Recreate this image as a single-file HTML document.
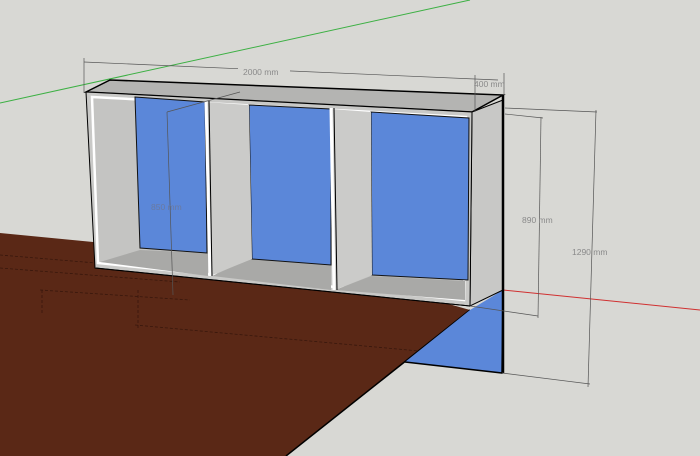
<!DOCTYPE html>
<html><head><style>html,body{margin:0;padding:0;background:#d8d8d4;}svg{display:block}</style></head><body>
<svg width="700" height="456" viewBox="0 0 700 456" xmlns="http://www.w3.org/2000/svg" font-family="Liberation Sans, sans-serif">
<rect width="700" height="456" fill="#d8d8d4"/>
<line x1="0" y1="103" x2="470" y2="0" stroke="#3cb043" stroke-width="1"/>
<line x1="503" y1="290" x2="700" y2="310" stroke="#d03030" stroke-width="1"/>
<!-- floor -->
<polygon points="0,233 300,262 470,310 286,456 0,456" fill="#5a2816"/>
<line x1="470" y1="310" x2="286" y2="456" stroke="#000" stroke-width="1.5"/>
<!-- hidden dashed lines on floor -->
<g stroke="#2a1008" stroke-width="0.8" stroke-dasharray="3,2" fill="none" opacity="0.7">
<line x1="0" y1="255" x2="180" y2="270"/><line x1="0" y1="268" x2="180" y2="282"/>
<line x1="40" y1="290" x2="190" y2="300"/><line x1="135" y1="325" x2="430" y2="352"/>
<line x1="42" y1="290" x2="42" y2="315"/><line x1="138" y1="290" x2="138" y2="328"/>
</g>
<!-- blue lower panel -->
<polygon points="470,310 503,290 502,373 405,362" fill="#5b87d9"/>
<polyline points="405,362 502,373 503,290" fill="none" stroke="#000" stroke-width="1.5"/>
<!-- cabinet top and right -->
<polygon points="86,92 110,80 503,95 472,112" fill="#b4b4b2" stroke="#000" stroke-width="1.5"/>
<polygon points="472,112 503,100 503,290 470,306" fill="#c8c8c6" stroke="#000" stroke-width="1"/>
<line x1="503" y1="95" x2="503" y2="373" stroke="#000" stroke-width="2.5"/>
<!-- front frame -->
<polygon points="86,92 472,112 470,306 95,268" fill="#c9c9c7" stroke="#000" stroke-width="1"/>
<polygon points="92,97 466,117 464,300 98,263" fill="#c4c4c2" stroke="#fff" stroke-width="2.5"/>
<!-- bottom shelves -->
<polygon points="100,262 140,250 208,253 208,276" fill="#a9a9a7"/>
<polygon points="212,276 249,259 331,265 331,290" fill="#a9a9a7"/>
<polygon points="335,290 371,276 465,281 465,300" fill="#a9a9a7"/>
<!-- blue backs -->
<polygon points="135,97 205,102 207,253 140,248" fill="#5b87d9" stroke="#111" stroke-width="1"/>
<polygon points="249,105 331,109 331,265 252,259" fill="#5b87d9" stroke="#111" stroke-width="1"/>
<polygon points="371,112 469,118 468,280 372,275" fill="#5b87d9" stroke="#111" stroke-width="1"/>
<!-- dividers -->
<polygon points="205,102 249,105 252,259 210,276" fill="#cbcbc9"/>
<polygon points="331,109 371,112 372,275 335,290" fill="#cbcbc9"/>
<line x1="206" y1="101" x2="210" y2="276" stroke="#fff" stroke-width="3"/>
<line x1="209" y1="101" x2="212" y2="276" stroke="#000" stroke-width="1"/>
<line x1="331" y1="108" x2="334" y2="290" stroke="#fff" stroke-width="3"/>
<line x1="334" y1="108" x2="337" y2="290" stroke="#000" stroke-width="1"/>
<line x1="96" y1="268" x2="470" y2="306" stroke="#000" stroke-width="1"/>
<!-- dimensions -->
<g stroke="#555" stroke-width="0.7" fill="none">
<line x1="84" y1="62" x2="498" y2="80"/><line x1="84" y1="58" x2="84" y2="92"/>
<line x1="475" y1="75" x2="475" y2="112"/><line x1="504" y1="73" x2="504" y2="95"/>
<line x1="167" y1="112" x2="173" y2="295"/><line x1="167" y1="112" x2="240" y2="92"/>
<line x1="505" y1="114" x2="543" y2="118"/><line x1="541" y1="117" x2="538" y2="318"/><line x1="470" y1="306" x2="538" y2="316"/>
<line x1="505" y1="108" x2="597" y2="112"/><line x1="596" y1="110" x2="588" y2="387"/><line x1="502" y1="373" x2="590" y2="384"/>
</g>
<g fill="#8a8a8a" font-size="8.5">
<rect x="238" y="66" width="52" height="10" fill="#d8d8d4"/>
<text x="243" y="75">2000 mm</text>
<text x="474" y="87">400 mm</text>
<text x="151" y="210" fill="#6a7aa0">850 mm</text>
<text x="522" y="223">890 mm</text>
<text x="572" y="255">1290 mm</text>
</g>
</svg>
</body></html>
